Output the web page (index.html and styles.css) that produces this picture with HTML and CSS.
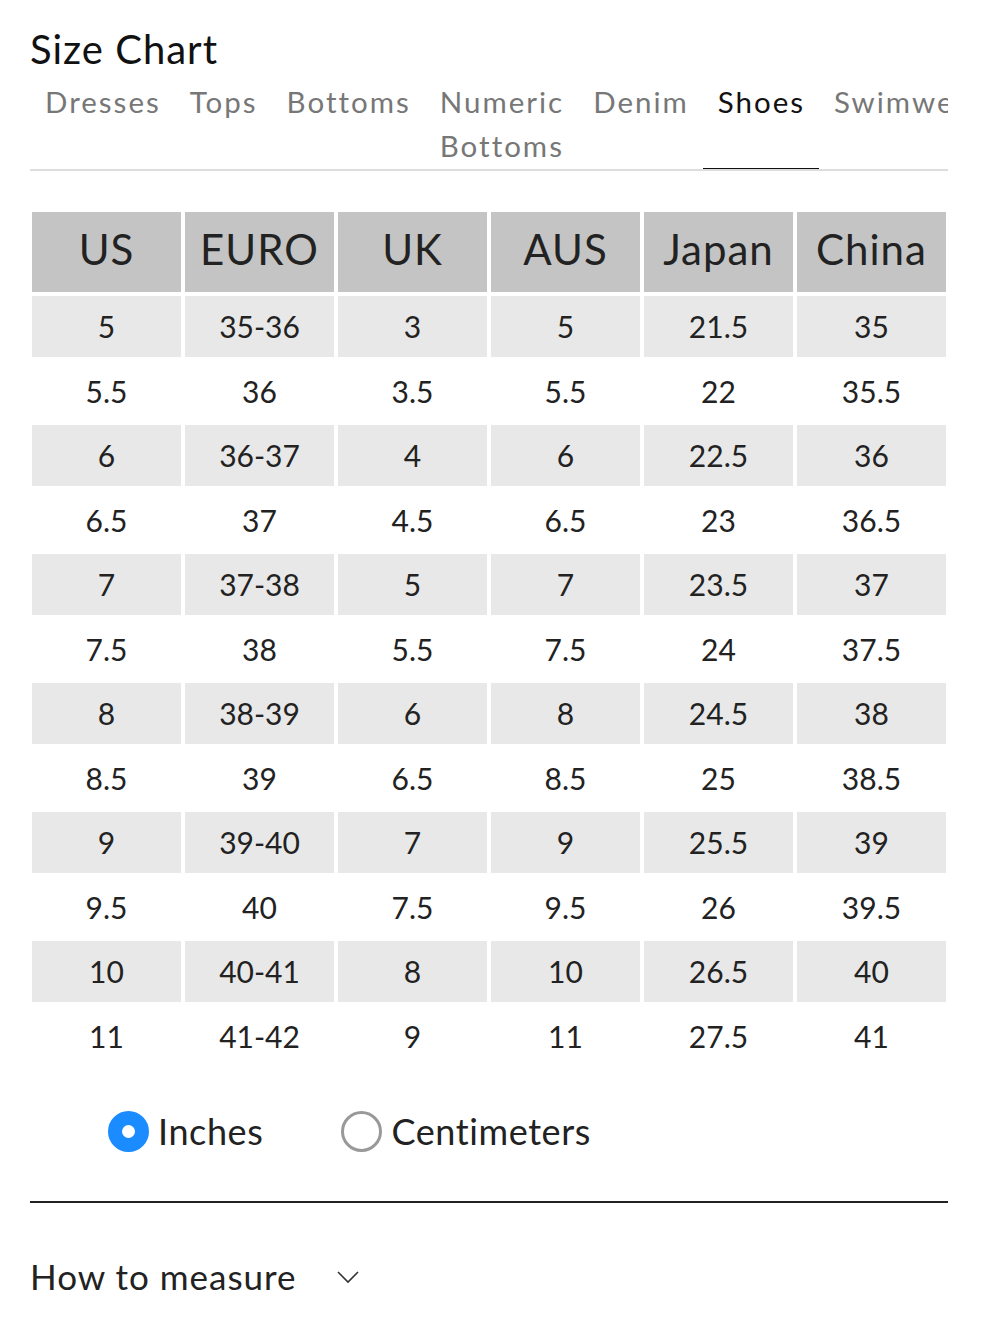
FILE: index.html
```html
<!DOCTYPE html>
<html>
<head>
<meta charset="utf-8">
<link rel="stylesheet" href="styles.css">
</head>
<body>
<div class="page">
  <h1 class="title">Size Chart</h1>
  <div class="tabs">
    <div class="tab">Dresses</div>
    <div class="tab">Tops</div>
    <div class="tab">Bottoms</div>
    <div class="tab">Numeric<br>Bottoms</div>
    <div class="tab">Denim</div>
    <div class="tab active">Shoes</div>
    <div class="tab">Swimwear</div>
  </div>

  <table class="chart">
    <thead>
      <tr><th>US</th><th>EURO</th><th>UK</th><th>AUS</th><th>Japan</th><th>China</th></tr>
    </thead>
    <tbody>
      <tr class="shade"><td>5</td><td>35-36</td><td>3</td><td>5</td><td>21.5</td><td>35</td></tr>
      <tr><td>5.5</td><td>36</td><td>3.5</td><td>5.5</td><td>22</td><td>35.5</td></tr>
      <tr class="shade"><td>6</td><td>36-37</td><td>4</td><td>6</td><td>22.5</td><td>36</td></tr>
      <tr><td>6.5</td><td>37</td><td>4.5</td><td>6.5</td><td>23</td><td>36.5</td></tr>
      <tr class="shade"><td>7</td><td>37-38</td><td>5</td><td>7</td><td>23.5</td><td>37</td></tr>
      <tr><td>7.5</td><td>38</td><td>5.5</td><td>7.5</td><td>24</td><td>37.5</td></tr>
      <tr class="shade"><td>8</td><td>38-39</td><td>6</td><td>8</td><td>24.5</td><td>38</td></tr>
      <tr><td>8.5</td><td>39</td><td>6.5</td><td>8.5</td><td>25</td><td>38.5</td></tr>
      <tr class="shade"><td>9</td><td>39-40</td><td>7</td><td>9</td><td>25.5</td><td>39</td></tr>
      <tr><td>9.5</td><td>40</td><td>7.5</td><td>9.5</td><td>26</td><td>39.5</td></tr>
      <tr class="shade"><td>10</td><td>40-41</td><td>8</td><td>10</td><td>26.5</td><td>40</td></tr>
      <tr><td>11</td><td>41-42</td><td>9</td><td>11</td><td>27.5</td><td>41</td></tr>
    </tbody>
  </table>

  <div class="units">
    <label class="radio"><span class="dot checked"></span><span>Inches</span></label>
    <label class="radio"><span class="dot"></span><span>Centimeters</span></label>
  </div>

  <div class="measure">
    <span>How to measure</span>
    <svg class="chev" width="22" height="14" viewBox="0 0 22 14"><path d="M1 2 L11 12 L21 2" fill="none" stroke="#333" stroke-width="1.6"/></svg>
  </div>
</div>
</body>
</html>
```

FILE: styles.css
```css
* { box-sizing: border-box; }
html, body { margin: 0; padding: 0; background: #fff; }
body {
  font-family: Lato, "Open Sans", "Liberation Sans", sans-serif;
  color: #222;
}
.page {
  width: 1000px;
  padding: 0 52px 0 30px;
}
.title {
  margin: 0;
  padding-top: 24px;
  font-size: 40px;
  line-height: 50px;
  font-weight: 400;
  letter-spacing: 1px;
  color: #111;
}
.tabs {
  display: flex;
  align-items: stretch;
  overflow: hidden;
  white-space: nowrap;
  border-bottom: 2px solid #ddd;
  margin-top: 6px;
}
.tab {
  flex: none;
  padding: 0 14px 0 15px;
  font-size: 29.5px;
  line-height: 44px;
  letter-spacing: 2px;
  color: #777;
  border-bottom: 3px solid transparent;
  margin-bottom: -2px;
}
.tab.active {
  color: #111;
  border-bottom-color: #111;
}
.chart {
  border-collapse: separate;
  border-spacing: 4px;
  width: 922px;
  margin: 37px 0 0 -2px;
  table-layout: fixed;
}
.chart th {
  background: #c4c4c4;
  height: 80px;
  font-size: 42px;
  font-weight: 400;
  letter-spacing: 1px;
  color: #222;
  text-align: center;
  padding: 0 0 6px;
}
.chart td {
  height: 60.5px;
  font-size: 30px;
  text-align: center;
  color: #222;
  padding: 0;
}
.chart tr.shade td { background: #e8e8e8; }
.units {
  display: flex;
  align-items: center;
  gap: 78px;
  padding-left: 78px;
  margin-top: 36px;
  height: 50px;
}
.radio {
  display: flex;
  align-items: center;
  gap: 9px;
  font-size: 36px;
  letter-spacing: 0.6px;
  color: #222;
}
.dot {
  width: 41px;
  height: 41px;
  border-radius: 50%;
  border: 3px solid #999;
  display: inline-block;
  flex: none;
}
.dot.checked {
  border: 14px solid #1a8cff;
  background: #fff;
}
.measure {
  border-top: 2px solid #222;
  margin-top: 45px;
  padding-top: 52px;
  display: flex;
  align-items: center;
  gap: 40px;
  font-size: 35px;
  letter-spacing: 1px;
  color: #222;
}
.chev { margin-top: 2px; }
```
